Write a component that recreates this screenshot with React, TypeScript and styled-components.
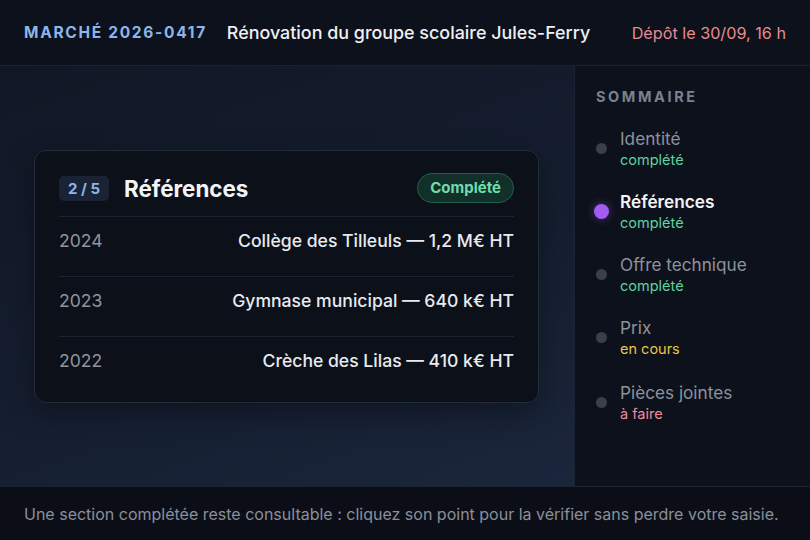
import styled, { createGlobalStyle } from 'styled-components';

const GlobalStyle = createGlobalStyle`
    html, body {
        margin: 0;
        padding: 0;
        background: #0b0e16;
    }
    body {
        font-family: Inter, "Noto Sans", sans-serif;
        -webkit-font-smoothing: antialiased;
    }
`;

const StyledPage = styled.div`
    width: 810px;
    height: 540px;
    display: flex;
    flex-direction: column;
    overflow: hidden;
`;

const StyledHeader = styled.header`
    height: 65px;
    flex: none;
    display: flex;
    align-items: center;
    padding: 0 24px;
    background: #0d111b;
    border-bottom: 1px solid #1c2230;
`;

const StyledRef = styled.span`
    color: #8cb6ea;
    font-size: 15.5px;
    font-weight: 700;
    letter-spacing: 1.7px;
    margin-right: 20px;
`;

const StyledTitle = styled.h1`
    margin: 0;
    color: #eef0f4;
    font-size: 17.9px;
    font-weight: 500;
    flex: 1;
`;

const StyledDeadline = styled.span`
    color: #e88a90;
    font-size: 16.2px;
`;

const StyledBody = styled.div`
    flex: 1;
    display: flex;
    min-height: 0;
`;

const StyledMain = styled.main`
    flex: 1;
    display: flex;
    align-items: flex-start;
    padding: 84px 35px 0 34px;
    background: linear-gradient(160deg, #111725 0%, #151e30 55%, #1a263b 100%);
`;

const StyledCard = styled.section`
    width: 100%;
    box-sizing: border-box;
    background: #0c1019;
    border: 1px solid #242b39;
    border-radius: 12px;
    padding: 22px 24px 6px 24px;
    box-shadow: 0 10px 30px rgba(0, 0, 0, 0.35);
`;

const StyledCardHead = styled.div`
    display: flex;
    align-items: center;
    height: 30px;
    padding-bottom: 13px;
`;

const StyledStep = styled.span`
    background: #1a2335;
    color: #8cb6ea;
    font-size: 15px;
    font-weight: 700;
    border-radius: 5px;
    padding: 3px 9px;
    margin-right: 15px;
`;

const StyledCardTitle = styled.h2`
    margin: 0;
    flex: 1;
    color: #f2f4f7;
    font-size: 22.4px;
    font-weight: 700;
`;

const StyledPill = styled.span`
    color: #6fdcaa;
    background: #12302a;
    border: 1px solid #23604c;
    border-radius: 999px;
    font-size: 15px;
    line-height: 18px;
    font-weight: 700;
    padding: 5px 12px;
`;

const StyledRow = styled.div`
    display: flex;
    justify-content: space-between;
    align-items: flex-start;
    box-sizing: border-box;
    height: 60px;
    padding-top: 13px;
    border-top: 1px solid #1d2330;
    font-size: 17.6px;
    line-height: 21px;
`;

const StyledYear = styled.span`
    color: #8f949e;
`;

const StyledProject = styled.span`
    color: #e8eaef;
    font-weight: 500;
`;

const StyledAside = styled.aside`
    width: 236px;
    flex: none;
    background: #0d111b;
    border-left: 1px solid #1c2230;
    padding: 22px 0 0 21px;
    box-sizing: border-box;
`;

const StyledAsideTitle = styled.div`
    color: #7b8190;
    font-size: 14.5px;
    line-height: 17px;
    font-weight: 700;
    letter-spacing: 2.6px;
    margin-bottom: 12px;
`;

const StyledItem = styled.div<{ $last?: boolean }>`
    display: flex;
    align-items: center;
    height: 63px;
    margin-top: ${(p) => (p.$last ? '2px' : '0')};
`;

const StyledDot = styled.span<{ $active?: boolean }>`
    width: ${(p) => (p.$active ? '15px' : '11px')};
    height: ${(p) => (p.$active ? '15px' : '11px')};
    margin: 0 ${(p) => (p.$active ? '11px' : '13px')} 0 ${(p) => (p.$active ? '-2px' : '0')};
    border-radius: 50%;
    flex: none;
    background: ${(p) => (p.$active ? '#a25cf0' : '#3a3f4a')};
    box-shadow: ${(p) => (p.$active ? '0 0 10px rgba(162, 92, 240, 0.45)' : 'none')};
`;

const StyledItemText = styled.div`
    display: flex;
    flex-direction: column;
    gap: 2px;
`;

const StyledItemLabel = styled.span<{ $active?: boolean }>`
    font-size: 17.2px;
    line-height: 20px;
    color: ${(p) => (p.$active ? '#f2f4f7' : '#8d929c')};
    font-weight: ${(p) => (p.$active ? 600 : 400)};
`;

const statusColors = {
    done: '#5fd3a2',
    progress: '#e8c547',
    todo: '#f0899a',
};

const StyledStatus = styled.span<{ $kind: keyof typeof statusColors }>`
    font-size: 14.5px;
    line-height: 18px;
    color: ${(p) => statusColors[p.$kind]};
`;

const StyledFooter = styled.footer`
    height: 53px;
    flex: none;
    display: flex;
    align-items: center;
    padding: 0 24px;
    background: #0b0e16;
    border-top: 1px solid #1c2230;
    color: #8a909b;
    font-size: 16px;
    white-space: nowrap;
`;

const references = [
    { year: '2024', label: 'Collège des Tilleuls — 1,2 M€ HT' },
    { year: '2023', label: 'Gymnase municipal — 640 k€ HT' },
    { year: '2022', label: 'Crèche des Lilas — 410 k€ HT' },
];

const sections: Array<{ label: string; status: string; kind: keyof typeof statusColors; active?: boolean }> = [
    { label: 'Identité', status: 'complété', kind: 'done' },
    { label: 'Références', status: 'complété', kind: 'done', active: true },
    { label: 'Offre technique', status: 'complété', kind: 'done' },
    { label: 'Prix', status: 'en cours', kind: 'progress' },
    { label: 'Pièces jointes', status: 'à faire', kind: 'todo' },
];

function App() {
    return (
        <StyledPage>
            <GlobalStyle />
            <StyledHeader>
                <StyledRef>MARCHÉ 2026-0417</StyledRef>
                <StyledTitle>Rénovation du groupe scolaire Jules-Ferry</StyledTitle>
                <StyledDeadline>Dépôt le 30/09, 16 h</StyledDeadline>
            </StyledHeader>
            <StyledBody>
                <StyledMain>
                    <StyledCard>
                        <StyledCardHead>
                            <StyledStep>2 / 5</StyledStep>
                            <StyledCardTitle>Références</StyledCardTitle>
                            <StyledPill>Complété</StyledPill>
                        </StyledCardHead>
                        {references.map((r) => (
                            <StyledRow key={r.year}>
                                <StyledYear>{r.year}</StyledYear>
                                <StyledProject>{r.label}</StyledProject>
                            </StyledRow>
                        ))}
                    </StyledCard>
                </StyledMain>
                <StyledAside>
                    <StyledAsideTitle>SOMMAIRE</StyledAsideTitle>
                    {sections.map((s, i) => (
                        <StyledItem key={s.label} $last={i === sections.length - 1}>
                            <StyledDot $active={s.active} />
                            <StyledItemText>
                                <StyledItemLabel $active={s.active}>{s.label}</StyledItemLabel>
                                <StyledStatus $kind={s.kind}>{s.status}</StyledStatus>
                            </StyledItemText>
                        </StyledItem>
                    ))}
                </StyledAside>
            </StyledBody>
            <StyledFooter>
                Une section complétée reste consultable : cliquez son point pour la vérifier sans perdre votre saisie.
            </StyledFooter>
        </StyledPage>
    );
}

export default App;
